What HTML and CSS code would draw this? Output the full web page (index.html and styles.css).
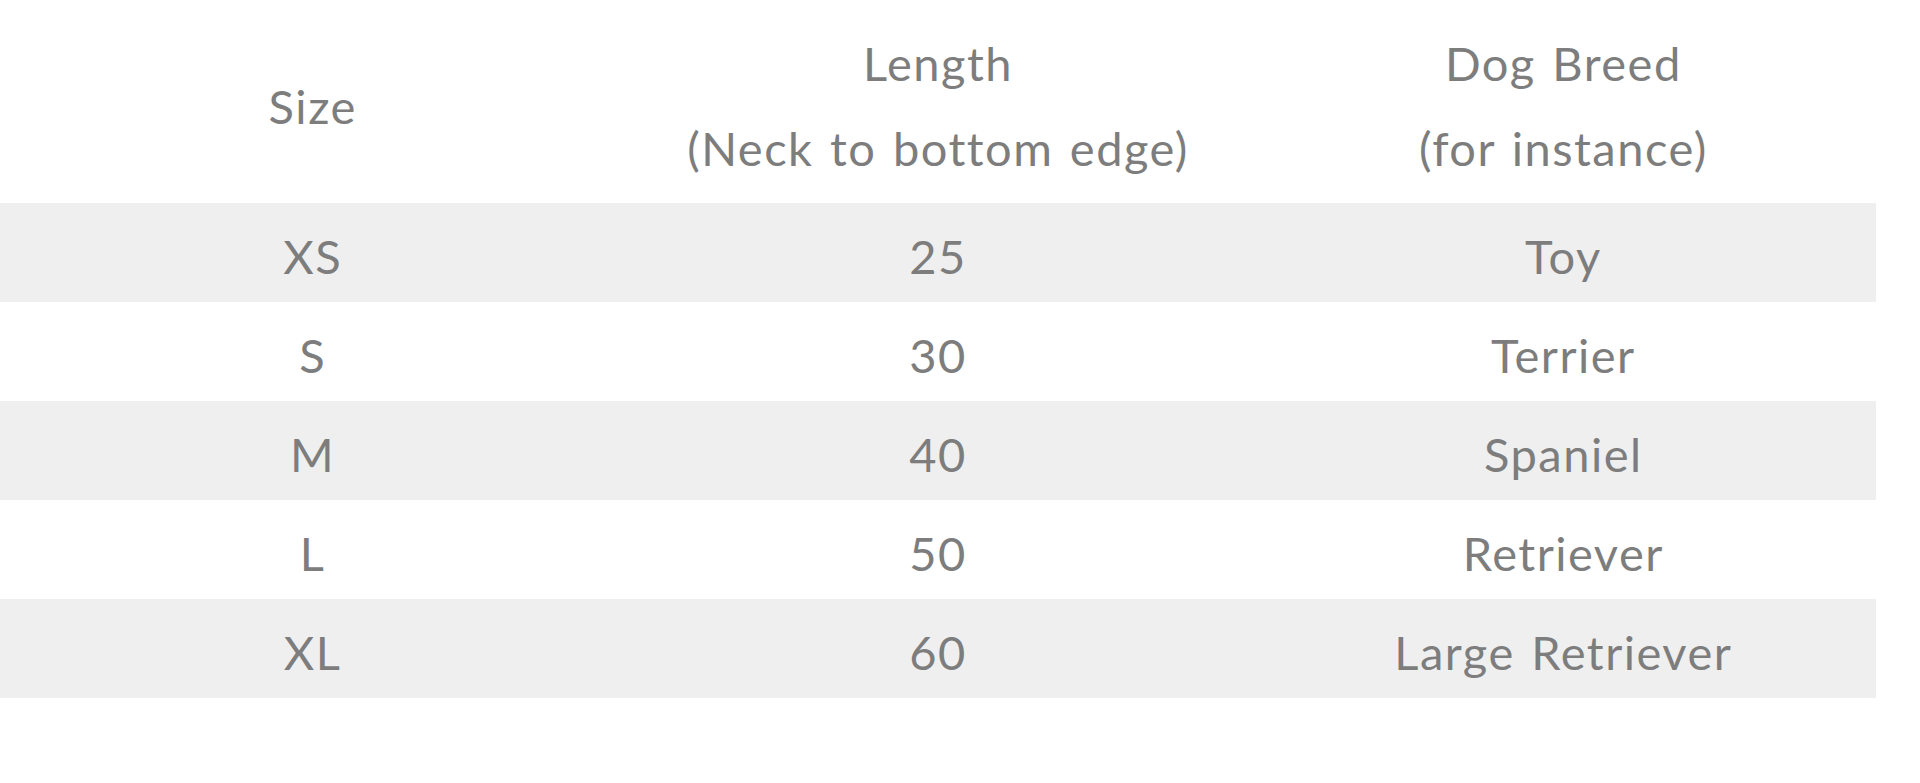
FILE: index.html
```html
<!DOCTYPE html>
<html lang="en">
<head>
<meta charset="utf-8">
<title>Size chart</title>
<link rel="stylesheet" href="styles.css">
</head>
<body>
<table class="size-table">
  <thead>
    <tr class="head-row">
      <th>Size</th>
      <th><span class="line">Length</span><span class="line">(Neck to bottom edge)</span></th>
      <th><span class="line">Dog Breed</span><span class="line">(for instance)</span></th>
    </tr>
  </thead>
  <tbody>
    <tr class="row shaded"><td>XS</td><td>25</td><td>Toy</td></tr>
    <tr class="row"><td>S</td><td>30</td><td>Terrier</td></tr>
    <tr class="row shaded"><td>M</td><td>40</td><td>Spaniel</td></tr>
    <tr class="row"><td>L</td><td>50</td><td>Retriever</td></tr>
    <tr class="row shaded"><td>XL</td><td>60</td><td>Large Retriever</td></tr>
  </tbody>
</table>
</body>
</html>
```

FILE: styles.css
```css
html, body {
  margin: 0;
  padding: 0;
  background: #ffffff;
}

body {
  font-family: "Lato", "Open Sans", sans-serif;
  color: #7d7d7d;
}

.size-table {
  width: 1876px;
  border-collapse: collapse;
  table-layout: fixed;
}

.size-table th,
.size-table td {
  text-align: center;
  vertical-align: middle;
  padding: 0;
  font-weight: 400;
  font-size: 47px;
  letter-spacing: 1.5px;
  word-spacing: 3px;
}

.head-row th {
  height: 203px;
  padding-top: 8px;
  box-sizing: border-box;
}

.line {
  display: block;
  line-height: 85px;
}

.row td {
  height: 99px;
  padding-top: 8px;
  box-sizing: border-box;
  line-height: 1.2;
}

.row.shaded {
  background: #efefef;
}
```
